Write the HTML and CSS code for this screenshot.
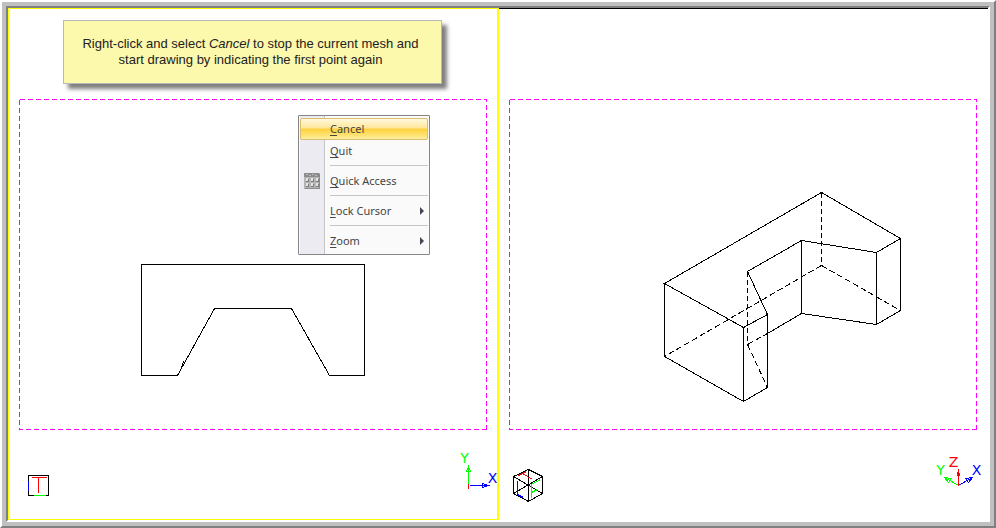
FILE: index.html
```html
<!DOCTYPE html>
<html lang="en">
<head>
<meta charset="utf-8">
<title>Mesh drawing</title>
<link rel="stylesheet" href="styles.css">
</head>
<body>
<main class="window">
  <div class="views">
    <section class="view view-active" aria-label="Top view">
      <!-- integer coordinates fall on pixel centres -->
      <svg class="canvas" viewBox="8.5 8.5 488 510" preserveAspectRatio="xMinYMin meet">
        <path class="sheet" d="M19 99H486V429M19 99V429H486"/>
        <path class="ink" d="M141 264H364V375H329L291 308H214L177 375H141ZM180 370L183 361"/>
        <path class="ink" d="M28 475H48V495H28Z"/>
        <path class="red" d="M31 477H46M38 477V492"/>
        <path class="blue" d="M28 480V490"/>
        <path class="green" d="M33 495H45"/>
        <path class="green" d="M468 466V483M468 466L466 471H470Z"/>
        <path class="blue" d="M469 485H488M488 485L482 483V487Z"/>
        <path class="red" d="M468 483V488"/>
        <text class="axis axis-y" x="464" y="462">Y</text>
        <text class="axis axis-x" x="492" y="482">X</text>
      </svg>
      <aside class="hint">Right-click and select <em>Cancel</em> to stop the current mesh and start drawing by indicating the first point again</aside>
      <div class="menu" role="menu">
        <button class="item item-hot" role="menuitem"><span><u>C</u>ancel</span></button>
        <button class="item" role="menuitem"><span><u>Q</u>uit</span></button>
        <hr class="rule">
        <button class="item" role="menuitem">
          <svg class="keypad" viewBox="0 0 16 16" aria-hidden="true">
            <path fill="#b4b4b4" d="M0 0H16V16H0Z"/>
            <path fill="#8c8c8c" d="M0 0H15V4H0ZM15 1H16V16H1V15H15Z"/>
            <path fill="#bbb" d="M2 1H4V2H2ZM5 2H7V3H5ZM8 1H10V2H8ZM11 2H13V3H11Z"/>
            <path fill="#7c7c7c" d="M2 6H5V9H2ZM7 6H10V9H7ZM12 6H15V9H12ZM2 11H5V14H2ZM7 11H10V14H7ZM12 11H15V14H12Z"/>
            <path fill="#e4e4e4" d="M2 5H4V8H2ZM7 5H9V8H7ZM12 5H14V8H12ZM2 10H4V13H2ZM7 10H9V13H7ZM12 10H14V13H12Z"/>
          </svg>
          <span><u>Q</u>uick Access</span>
        </button>
        <hr class="rule">
        <button class="item" role="menuitem" aria-haspopup="true"><span><u>L</u>ock Cursor</span><i class="arrow"></i></button>
        <hr class="rule">
        <button class="item" role="menuitem" aria-haspopup="true"><span><u>Z</u>oom</span><i class="arrow"></i></button>
      </div>
    </section>
    <section class="view view-plain" aria-label="Isometric view">
      <svg class="canvas" viewBox="498.5 8.5 489 511" preserveAspectRatio="xMinYMin meet">
        <path class="sheet" d="M509 99H976V429M509 99V429H976"/>
        <path class="ink" d="M664 283L821 192L900 238L876 252L801 240L747 271L767 314L743 327Z"/>
        <path class="ink" d="M664 283V356L743 401L767 387V314M743 327V401M801 240V313L876 324L900 310V238M876 252V324M801 313L767 333"/>
        <path class="ink hidden" d="M821 192V265M747 271V344"/>
        <path class="ink hidden-slant" d="M821 265L664 356M821 265L900 310M747 344L767 333M747 344L767 387"/>
        <path class="ink" d="M528 469L542 476V493L528 501L513 493V476ZM528 469V501M513 476L542 493M542 476L513 493"/>
        <path class="red" d="M518 475L526 471M522 473L532 479"/>
        <path class="blue" d="M517 480V494L523 497"/>
        <path class="green" d="M531 497V484L540 479M531 492L537 489"/>
        <path class="green" d="M958 485L944 477M944 477L951 478L948 482Z"/>
        <path class="blue" d="M958 485L972 477M972 477L965 478L968 482Z"/>
        <path class="red" d="M958 485V469M958 469L957 475H959Z"/>
        <text class="axis axis-z" x="953" y="466">Z</text>
        <text class="axis axis-y" x="940" y="474">Y</text>
        <text class="axis axis-x" x="976" y="474">X</text>
      </svg>
    </section>
  </div>
</main>
</body>
</html>
```
FILE: styles.css
```css
* { box-sizing: border-box; }

body {
  margin: 0;
  background: #fff;
  font-family: "Liberation Sans", Arial, sans-serif;
}

.window {
  display: flex;
  min-height: 100vh;
  border: 2px solid #808080;
  border-top-color: #fff;
  border-left-color: #fff;
  background: #c0c0c0;
  padding: 4px;
}

.views {
  flex: 1;
  display: grid;
  grid-template-columns: minmax(0, 491fr) minmax(0, 489fr);
  border: 2px solid #fff;
  border-top-color: #808080;
  border-left-color: #808080;
  background: #fff;
}

.view { position: relative; }

.view-active {
  border: 1px solid #ff0;
  border-right-width: 2px;
}

.view-plain { border-top: 1px solid #000; }

.canvas {
  display: block;
  width: 100%;
  shape-rendering: crispEdges;
}

.canvas path { fill: none; stroke-width: 1; }
.canvas .sheet { stroke: #f0f; stroke-dasharray: 5 3; }
.canvas .ink { stroke: #000; }
.canvas .hidden { stroke-dasharray: 5 3; }
.canvas .hidden-slant { stroke-dasharray: 6 3; }
.canvas .red { stroke: #f00; }
.canvas .green { stroke: #0f0; }
.canvas .blue { stroke: #00f; }

.axis {
  font-family: "DejaVu Sans", sans-serif;
  font-size: 14px;
  text-anchor: middle;
}
.axis-x { fill: #00f; }
.axis-y { fill: #0f0; }
.axis-z { fill: #f00; }

.hint {
  position: absolute;
  left: 54px;
  top: 11px;
  width: 379px;
  padding: 15px 18px 15px 14px;
  border: 1px solid #b8b8b8;
  background: #fcf8ac;
  box-shadow: 5px 5px 4px rgba(0, 0, 0, 0.5);
  color: #222;
  font-size: 13px;
  line-height: 16px;
  text-align: center;
}

.menu {
  position: absolute;
  left: 289px;
  top: 106px;
  width: 132px;
  padding: 2px 1px;
  border: 1px solid #868686;
  border-radius: 1px;
  background: linear-gradient(to right, #fafafa 1px, #ecebf2 1px 25px, #c5c5c5 25px 26px, #fafafa 26px);
}

.item {
  display: flex;
  align-items: center;
  position: relative;
  width: 100%;
  height: 22px;
  padding: 0 3px 0 29px;
  border: 1px solid transparent;
  background: none;
  color: #444;
  font: 11px/20px "Noto Sans", "Open Sans", sans-serif;
  text-align: left;
}

.item u { text-underline-offset: 2px; }

.item-hot {
  border-color: #dbbd70;
  border-radius: 2px;
  background: linear-gradient(#fff9dc, #ffe69b 45%, #ffd23d 50%, #ffe479 85%, #fff0a8);
}

.rule {
  height: 8px;
  margin: 0 0 0 30px;
  border: 0;
  background: linear-gradient(transparent 3px, #c5c5c5 3px 4px, transparent 4px);
}

.keypad {
  position: absolute;
  left: 3px;
  top: 2px;
  width: 16px;
  height: 16px;
  shape-rendering: crispEdges;
}

.arrow {
  margin-left: auto;
  border: 4px solid transparent;
  border-left-color: #445;
  border-right-width: 0;
}
```
